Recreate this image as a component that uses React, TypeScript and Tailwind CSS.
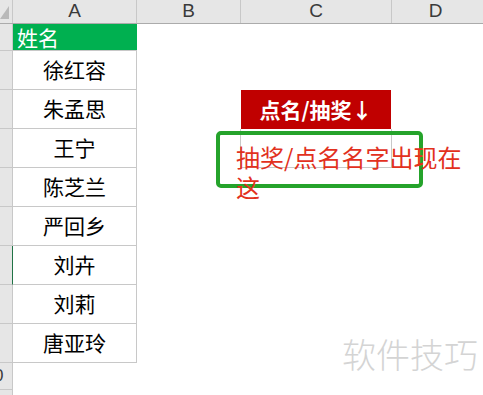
import React from 'react';

const names = ['徐红容', '朱孟思', '王宁', '陈芝兰', '严回乡', '刘卉', '刘莉', '唐亚玲'];

const cjk = "font-['Noto_Sans_CJK_SC','Noto_Sans',sans-serif]";
const grid = 'border-[#c8c8c8]';

function HeaderRow() {
  return (
    <div className="flex h-[24px] bg-[#e6e6e6] border-b border-[#ababab] font-['Liberation_Sans',Arial,sans-serif] text-[19px] text-[#3a3a3a]">
      <div className="relative w-[13px] shrink-0 border-r border-[#c8c8c8]">
        <svg className="absolute left-0 top-[6px]" width="9" height="13" viewBox="0 0 9 13">
          <polygon points="9,0 9,13 0,13" fill="#b9b9b9" />
        </svg>
      </div>
      <div className="w-[124px] shrink-0 border-r border-[#c8c8c8] flex items-center justify-center">A</div>
      <div className="w-[104px] shrink-0 border-r border-[#c8c8c8] flex items-center justify-center">B</div>
      <div className="w-[151px] shrink-0 border-r border-[#c8c8c8] flex items-center justify-center">C</div>
      <div className="flex-1 flex items-center justify-center pr-[4px]">D</div>
    </div>
  );
}

export default function App() {
  return (
    <div className={`relative w-[483px] h-[395px] overflow-hidden bg-white ${cjk}`}>
      <HeaderRow />

      {/* row 1 */}
      <div className="flex h-[27px]">
        <div className={`w-[13px] shrink-0 bg-[#e6e6e6] border-r border-b ${grid}`} />
        <div className={`w-[124px] shrink-0 bg-[#00b050] border-b ${grid} text-white text-[21px] leading-none flex items-center pl-[4px]`}>
          姓名
        </div>
      </div>

      {/* rows 2-9 */}
      {names.map((n, i) => (
        <div key={n} className="flex h-[39px]">
          <div
            className={`w-[13px] shrink-0 bg-[#e6e6e6] border-b ${grid} border-r ${i === 5 ? 'border-r-[#217346]' : ''}`}
          />
          <div className={`w-[124px] shrink-0 border-r border-b ${grid} text-[21px] text-black flex items-center justify-center`}>
            {n}
          </div>
          <div className={`w-[104px] shrink-0 ${i === 2 ? `border-r ${grid}` : ''}`} />
          {i === 1 && (
            <div className="w-[150px] shrink-0 bg-[#c00000] text-white font-bold text-[21px] flex items-center justify-center">
              点名/抽奖↓
            </div>
          )}
          {i === 2 && <div className={`w-[151px] shrink-0 border-r border-b ${grid}`} />}
        </div>
      ))}

      {/* row 10, number mostly scrolled out of view */}
      <div className="flex h-[27px]">
        <div className={`w-[13px] shrink-0 bg-[#e6e6e6] border-r border-b ${grid} overflow-hidden flex items-center font-['Liberation_Sans',Arial,sans-serif] text-[17px] text-[#3a3a3a]`}>
          <span className="block shrink-0 -ml-[6px]">0</span>
        </div>
      </div>
      <div className="flex h-[20px]">
        <div className={`w-[13px] shrink-0 bg-[#e6e6e6] border-r ${grid}`} />
      </div>

      {/* annotation */}
      <div className="absolute left-[216px] top-[131px] w-[207px] h-[57px] border-4 border-[#25a32b] rounded-[5px]" />
      <div className="absolute left-[236px] top-[142px] w-[238px] text-[24px] leading-[30px] text-[#e2311d]">
        抽奖/点名名字出现在这
      </div>

      {/* watermark */}
      <div className="absolute left-[342px] top-[337px] text-[34px] leading-none font-light text-[#d4d4d4]">
        软件技巧
      </div>
    </div>
  );
}
